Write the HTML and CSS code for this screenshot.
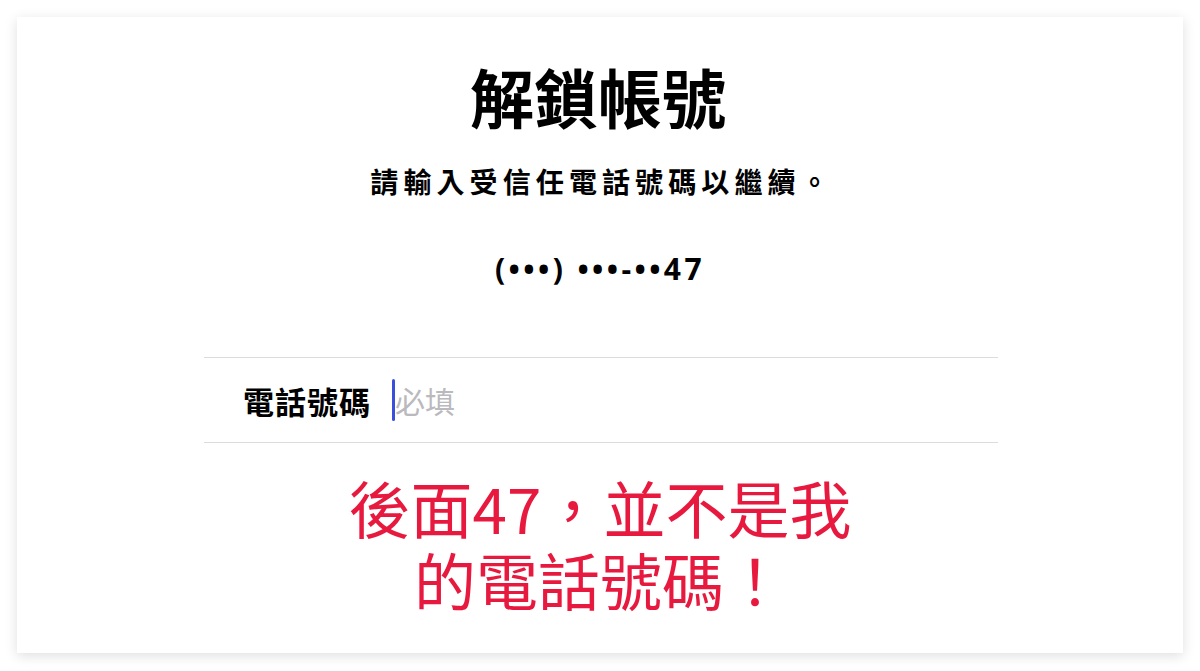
FILE: index.html
```html
<!DOCTYPE html>
<html lang="zh-Hant">
<head>
<meta charset="utf-8">
<title>解鎖帳號</title>
<link rel="stylesheet" href="styles.css">
</head>
<body>
<main class="card">
  <h1 class="title">解鎖帳號</h1>
  <p class="subtitle">請輸入受信任電話號碼以繼續。</p>
  <p class="phone">(•••) •••-••47</p>
  <div class="field">
    <span class="field-label">電話號碼</span>
    <span class="cursor"></span>
    <span class="placeholder">必填</span>
  </div>
  <div class="note">
    <p class="note-line">後面47，並不是我</p>
    <p class="note-line">的電話號碼！</p>
  </div>
</main>
</body>
</html>
```
FILE: styles.css
```css
html, body {
  margin: 0;
  padding: 0;
  background: #ffffff;
}
body {
  width: 1200px;
  height: 671px;
  overflow: hidden;
  font-family: "Noto Sans CJK TC", "Noto Sans", sans-serif;
  color: #000;
}
.card {
  box-sizing: border-box;
  margin: 17px 0 0 17px;
  width: 1166px;
  height: 636px;
  background: #fff;
  box-shadow: 0 3px 12px rgba(0, 0, 0, 0.13);
  display: flex;
  flex-direction: column;
  align-items: center;
  padding-top: 40px;
}
.title {
  margin: 0;
  font-size: 64px;
  line-height: 76px;
  font-weight: 700;
  padding-right: 4px;
}
.subtitle {
  margin: 28px 0 0;
  font-size: 28px;
  line-height: 40px;
  font-weight: 700;
  letter-spacing: 5.1px;
  padding-left: 4px;
}
.phone {
  margin: 48px 0 0;
  font-family: "Open Sans", "Noto Sans", sans-serif;
  font-size: 30px;
  line-height: 40px;
  font-weight: 700;
  letter-spacing: 3.4px;
}
.field {
  margin-top: 68px;
  width: 794px;
  margin-left: 2px;
  height: 86px;
  border-top: 1px solid #dcdcdc;
  border-bottom: 1px solid #dcdcdc;
  display: flex;
  align-items: center;
  padding-left: 39px;
  box-sizing: border-box;
}
.field-label {
  font-size: 31px;
  font-weight: 700;
  letter-spacing: 1px;
}
.cursor {
  width: 3px;
  height: 42px;
  background: #3a50dc;
  border-radius: 2px;
  margin-left: 21px;
}
.placeholder {
  font-size: 30px;
  color: #b9b9be;
}
.note {
  margin-top: 28px;
  display: flex;
  flex-direction: column;
  align-items: center;
}
.note-line {
  margin: 0;
  height: 72px;
  font-size: 62px;
  line-height: 72px;
  font-weight: 400;
  color: #e8193e;
  white-space: nowrap;
}
```
